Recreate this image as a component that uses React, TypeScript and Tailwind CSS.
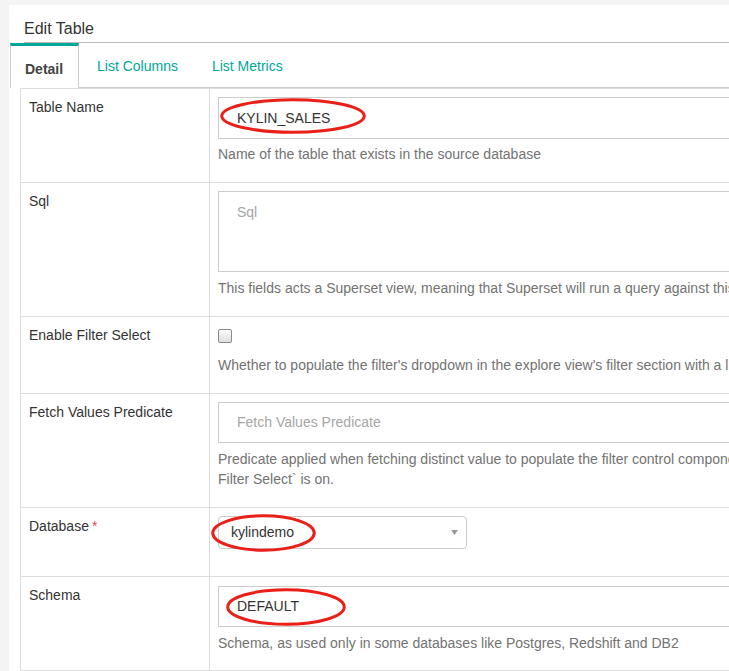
import React from 'react';

// --- red hand-drawn marks over the form ---

const Ring = ({ className, w, h }: { className: string; w: number; h: number }) => (
  <svg className={`pointer-events-none absolute ${className}`} width={w} height={h} viewBox={`0 0 ${w} ${h}`}>
    <ellipse cx={w / 2} cy={h / 2} rx={w / 2 - 1.75} ry={h / 2 - 1.75} fill="none" stroke="#ea1f17" strokeWidth="3" />
  </svg>
);

const Help = ({ className = '', children }: { className?: string; children: React.ReactNode }) => (
  <div className={`whitespace-nowrap text-[14px] leading-[20px] text-[#737373] ${className}`}>{children}</div>
);

const Row = ({
  label,
  required,
  pad,
  children,
}: {
  label: string;
  required?: boolean;
  pad: string;
  children: React.ReactNode;
}) => (
  <div className="grid grid-cols-[189px_1fr] border-b border-[#ddd]">
    <div className="border-r border-[#ddd] pl-[8px] pt-[8px] text-[14px] leading-[20px] text-[#333]">
      {label}
      {required && <span className="ml-[3px] text-[#e04b4b]">*</span>}
    </div>
    <div className={`pl-[8px] ${pad}`}>{children}</div>
  </div>
);

const TextBox = ({ value, placeholder }: { value?: string; placeholder?: string }) => (
  <div className="flex h-[42px] items-center border border-[#ccc] pl-[18px] text-[14px]">
    {value ? <span className="text-[#333]">{value}</span> : <span className="text-[#a6a6a6]">{placeholder}</span>}
  </div>
);

export default function App() {
  return (
    <div className="h-[671px] w-[729px] overflow-hidden bg-[#f4f4f4] pl-[9px] pt-[5px] font-['Liberation_Sans',Arial,sans-serif]">
      <div className="h-[700px] w-[1500px] bg-white">
        {/* header */}
        <div className="ml-[15px] h-[38px] border-b border-[#bbb] pt-[13px] text-[16px] leading-[22px] text-[#333]">
          Edit Table
        </div>

        {/* tabs */}
        <div className="ml-px flex h-[45px] text-[14px]">
          <div className="w-[69px] border-x border-t-[3px] border-[#ccc] border-t-[#00a699] bg-white pl-[14px] pt-[13px] font-bold text-[#444]">
            Detail
          </div>
          <div className="w-[1px] border-b border-[#ccc]" />
          <div className="border-b border-[#ccc] px-[17px] pt-[13px] text-[#00a699]">List Columns</div>
          <div className="w-[1px] border-b border-[#ccc]" />
          <div className="border-b border-[#ccc] px-[16px] pt-[13px] text-[#00a699]">List Metrics</div>
          <div className="flex-1 border-b border-[#ccc]" />
        </div>

        {/* form table */}
        <div className="ml-[11px] border-l border-t border-[#ddd]">
          <Row label="Table Name" pad="pt-[8px] pb-[18px]">
            <div className="relative">
              <TextBox value="KYLIN_SALES" />
              <Ring className="left-[2px] top-[1px]" w={146} h={36} />
            </div>
            <Help className="mt-[5px]">Name of the table that exists in the source database</Help>
          </Row>

          <Row label="Sql" pad="pt-[8px] pb-[18px]">
            <div className="h-[81px] border border-[#ccc] pl-[18px] pt-[10px] text-[14px] leading-[20px] text-[#a6a6a6]">
              Sql
            </div>
            <Help className="mt-[6px]">
              This fields acts a Superset view, meaning that Superset will run a query against this string as a subquery.
            </Help>
          </Row>

          <Row label="Enable Filter Select" pad="pt-[12px] pb-[18px]">
            <div className="h-[14px] w-[14px] rounded-[2px] border border-[#8a8a8a] bg-linear-to-b from-[#fbfbfb] to-[#dedede]" />
            <Help className="mt-[12px]">
              Whether to populate the filter's dropdown in the explore view's filter section with a list of distinct values
              fetched from the backend on the fly
            </Help>
          </Row>

          <Row label="Fetch Values Predicate" pad="pt-[8px] pb-[18px]">
            <div className="flex h-[41px] items-center border border-[#ccc] pl-[18px] text-[14px] text-[#a6a6a6]">
              Fetch Values Predicate
            </div>
            <Help className="mt-[6px]">
              Predicate applied when fetching distinct value to populate the filter control component. Supports jinja
              template syntax. Applies only when `Enable
              <br />
              Filter Select` is on.
            </Help>
          </Row>

          <Row label="Database" required pad="pt-[8px] pb-[27px]">
            <div className="relative w-[249px]">
              <div className="flex h-[33px] items-center justify-between rounded-[4px] border border-[#ccc] pl-[12px] pr-[8px] text-[14px] text-[#333]">
                <span>kylindemo</span>
                <svg width="7" height="5" viewBox="0 0 7 5">
                  <path d="M0 0 L7 0 L3.5 5 Z" fill="#999" />
                </svg>
              </div>
              <Ring className="-left-[7px] -top-[2px]" w={105} h={38} />
            </div>
          </Row>

          <Row label="Schema" pad="pt-[9px] pb-[17px]">
            <div className="relative">
              <div className="flex h-[41px] items-center border border-[#ccc] pl-[18px] text-[14px] text-[#333]">DEFAULT</div>
              <Ring className="left-[8px] top-[2px]" w={120} h={38} />
            </div>
            <Help className="mt-[6px]">Schema, as used only in some databases like Postgres, Redshift and DB2</Help>
          </Row>
        </div>
      </div>
    </div>
  );
}
